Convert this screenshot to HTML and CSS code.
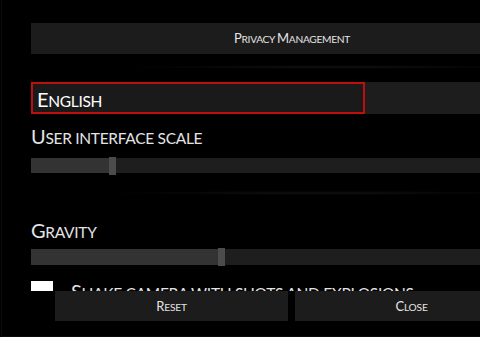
FILE: index.html
```html
<!DOCTYPE html>
<html lang="en">
  <head>
    <meta charset="UTF-8" />
    <meta name="viewport" content="width=device-width, initial-scale=1.0" />
    <title>Settings</title>
    <link rel="stylesheet" href="styles.css">
  </head>
  <body>
    <div id="screen">
      <div id="panel">
        <button class="wideBtn"><span class="cap">P</span>rivacy <span class="cap">M</span>anagement</button>
        <div class="sep"></div>
        <div class="select">
          <span class="selectFocus"><span class="cap">E</span>nglish</span>
        </div>
        <div class="label"><span class="cap">U</span>ser interface scale</div>
        <div class="slider">
          <div class="fill" style="width: 78px"></div>
          <div class="thumb"></div>
        </div>
        <div class="sep sep2"></div>
        <div class="label gravity"><span class="cap">G</span>ravity</div>
        <div class="slider slider2">
          <div class="fill" style="width: 187px"></div>
          <div class="thumb"></div>
        </div>
        <div class="check">
          <span class="box"></span>
          <span class="checkText"><span class="cap">S</span>hake camera with shots and explosions</span>
        </div>
      </div>
      <div id="footer">
        <button class="footBtn"><span class="cap">R</span>eset</button>
        <button class="footBtn"><span class="cap">C</span>lose</button>
      </div>
    </div>
  </body>
</html>
```

FILE: styles.css
```css
* {
  padding: 0;
  margin: 0;
  box-sizing: border-box;
}
body {
  width: 480px;
  height: 337px;
  overflow: hidden;
  background-color: #000000;
  color: #e4e4e4;
  font-family: Lato, "Liberation Sans", sans-serif;
  text-transform: uppercase;
}
#screen {
  width: 480px;
  height: 337px;
  border-left: 1px solid #0c0c0c;
  border-bottom: 1px solid #0c0c0c;
  margin-left: 1px;
}
#panel {
  height: 291px;
  overflow: hidden;
  padding: 23px 0 0 29px;
  width: 560px;
}
.cap {
  line-height: 1;
}
.wideBtn {
  display: block;
  width: 522px;
  height: 31px;
  border: none;
  background-color: #1c1c1c;
  color: #e4e4e4;
  font-family: inherit;
  text-transform: uppercase;
  font-size: 10.2px;
  letter-spacing: -0.3px;
  line-height: 16px;
  padding-top: 1px;
}
.wideBtn .cap,
.footBtn .cap {
  font-size: 13px;
}
.label .cap,
.selectFocus .cap,
.checkText .cap {
  font-size: 20px;
}
.sep {
  width: 420px;
  height: 4px;
  margin: 11px 0 13px 90px;
  background: radial-gradient(ellipse at center, rgba(255, 255, 255, 0.07) 0%, rgba(255, 255, 255, 0.025) 45%, transparent 72%);
}
.sep2 {
  margin: 18px 0 0 70px;
  width: 440px;
}
.select {
  width: 522px;
  height: 32px;
  background-color: #1d1d1d;
}
.selectFocus {
  display: block;
  width: 334px;
  height: 32px;
  border: 2px solid #c00d0d;
  background-color: #1a1a1a;
  color: #ffffff;
  font-size: 15.5px;
  letter-spacing: -0.3px;
  line-height: 24px;
  padding: 5px 0 0 4px;
}
.label {
  font-size: 15.5px;
  letter-spacing: -0.3px;
  line-height: 24px;
  margin-top: 12px;
}
.gravity {
  margin-top: 25px;
}
.slider {
  width: 522px;
  height: 15px;
  margin-top: 8px;
  background-color: #1e1e1e;
  display: flex;
  align-items: center;
}
.slider2 {
  height: 16px;
  margin-top: 5px;
}
.fill {
  height: 100%;
  background-color: #333333;
}
.thumb {
  width: 7px;
  height: 18px;
  background-color: #4c4c4c;
  flex-shrink: 0;
}
.check {
  display: flex;
  align-items: flex-start;
  margin-top: 16px;
}
.box {
  width: 22px;
  height: 22px;
  background-color: #ffffff;
}
.checkText {
  font-size: 15.5px;
  letter-spacing: -0.3px;
  line-height: 24px;
  margin-left: 18px;
}
#footer {
  display: flex;
  gap: 7px;
  padding-left: 53px;
}
.footBtn {
  flex-shrink: 0;
  width: 233px;
  height: 30px;
  border: none;
  background-color: #1c1c1c;
  color: #e4e4e4;
  font-family: inherit;
  text-transform: uppercase;
  font-size: 10.2px;
  letter-spacing: -0.2px;
}
button:hover {
  opacity: 0.85;
  cursor: pointer;
}
```
